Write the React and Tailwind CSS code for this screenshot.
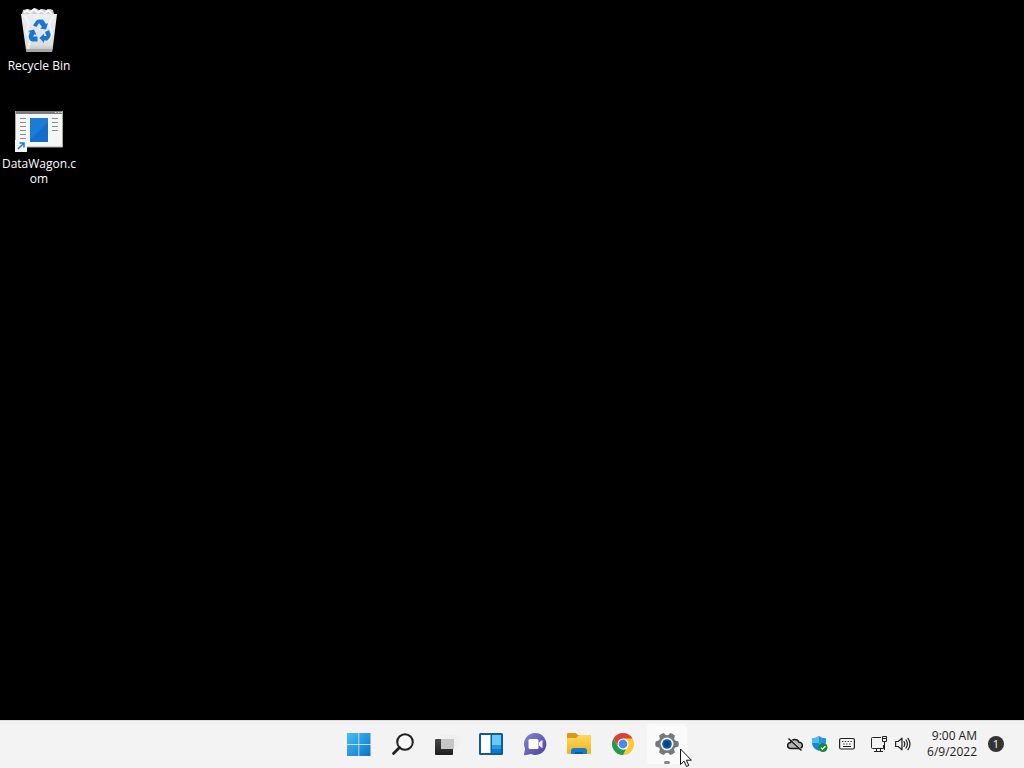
import { useState } from "react";

const RecycleBinIcon = () => (
    <svg viewBox="0 0 48 48" className="size-12" aria-hidden="true">
        <defs>
            <linearGradient id="bin" x1="0" y1="0" x2="0" y2="1">
                <stop offset="0" stopColor="#eceef0" />
                <stop offset="0.8" stopColor="#dddfe1" />
                <stop offset="1" stopColor="#b5b7b9" />
            </linearGradient>
        </defs>
        <path d="M7 8l1-4 5-1 3 1 4-2 4 2 3-1 5 1 3-1 3 1 1 4z" fill="#cfd1d4" />
        <path d="M9 7l3-3 3 3 4-4 4 4 3-3 4 4 3-4 4 4" fill="none" stroke="#fff" strokeWidth="1.5" />
        <path d="M6 8h36l-4.500 36.500q-.2 1.500-1.500 1.500H12.500q-1.300 0-1.500-1.500z" fill="url(#bin)" />
        <path d="M10 10l4 8-3 8 4 9-2 8M38 10l-4 8 3 9-4 8M20 11l8 3" fill="none" stroke="#f9fafb" strokeWidth="2" opacity=".7" />
        <path d="M11 43h26v1.500q-.2 1.500-1.500 1.500H12.500q-1.300 0-1.500-1.500z" fill="#a5a7a9" />
        <g fill="#1878d0">
            <path d="M18 19.500l3-4.500q1-1.500 3-1.500h4l3 4.500 2-1-2 6.500-6-1 2-1.500-3-4-2.500 4z" />
            <path d="M30 26l4-2 1.500 4q.5 2-1 4l-2 2.500h-3.500V37l-4.500-5 4.500-4.500V30h2.500z" />
            <path d="M15 26l-2-1 6-1.500 2.500 5.500-2-.8-1.500 2.300h4.500v5h-5q-2 0-3-2l-1-3z" />
        </g>
    </svg>
);

const ShortcutIcon = () => (
    <svg viewBox="0 0 48 48" className="size-12" aria-hidden="true">
        <path d="M0 7h48v36H0z" fill="#f6f6f6" />
        <path d="M0 7h48v3H0z" fill="#7b7b7b" />
        <path d="M40 8.500h1.500M43 8.500h1.500M45.500 8.500H47" stroke="#ddd" />
        <path d="M.5 7v36h47V7" fill="none" stroke="#a8a8a8" />
        <path d="M5 14.500h6M5 18.500h6M5 22.500h6M5 26.500h6M5 30.500h6M5 34.500h6M37 14.500h6M37 18.500h6M37 22.500h6M37 26.500h6" stroke="#8d8d8d" />
        <path d="M15 14h18v24H15z" fill="#1b7cd6" />
        <path d="M33 18L15 36v2h18z" fill="#146dc8" />
        <rect x="0" y="36" width="12" height="12" fill="#f5f5f5" />
        <path d="M3 45l6-6M4.500 39H9v4.500" fill="none" stroke="#1c7fd3" strokeWidth="1.500" />
    </svg>
);

const StartIcon = () => (
    <svg viewBox="0 0 24 24" className="size-6" aria-hidden="true">
        <defs>
            <linearGradient id="start" x1="0" y1="0" x2="24" y2="24" gradientUnits="userSpaceOnUse">
                <stop offset="0" stopColor="#45c4f0" />
                <stop offset="1" stopColor="#0c70cc" />
            </linearGradient>
        </defs>
        <path d="M0 1h11.500v11H0zM12.200 1h11.300v11H12.200zM0 12.700h11.500V24H0zM12.200 12.700h11.300V24H12.200z" fill="url(#start)" />
    </svg>
);

const SearchIcon = () => (
    <svg viewBox="0 0 24 24" className="size-6" fill="none" stroke="#202020" aria-hidden="true">
        <circle cx="14" cy="10" r="7.800" fill="#f7f7f7" strokeWidth="2" />
        <path d="M8.500 15.500L2.500 21.500" strokeWidth="2.800" strokeLinecap="round" />
    </svg>
);

const TaskViewIcon = () => (
    <svg viewBox="0 0 24 24" className="size-6" aria-hidden="true">
        <defs>
            <linearGradient id="task" x1="0" y1="0" x2="0" y2="1">
                <stop offset="0" stopColor="#4a4a4a" />
                <stop offset="1" stopColor="#1d1d1d" />
            </linearGradient>
        </defs>
        <rect x="0" y="7" width="18" height="16" rx="1" fill="url(#task)" />
        <path d="M7 3h16q1 0 1 1v10q0 1-1 1h-4z" fill="#efefef" />
        <rect x="6" y="7" width="13" height="10" fill="#c6c6c6" />
    </svg>
);

const WidgetsIcon = () => (
    <svg viewBox="0 0 24 24" className="size-6" aria-hidden="true">
        <rect x="0" y="1" width="24" height="22" rx="1.500" fill="#135a96" />
        <rect x="2" y="3" width="9.500" height="18" fill="#fbfdff" />
        <rect x="13" y="3" width="9" height="10" fill="#63cbf5" />
        <rect x="13" y="13" width="9" height="4" fill="#259be6" />
        <rect x="13" y="17" width="9" height="4" fill="#0d78d2" />
    </svg>
);

const ChatIcon = () => (
    <svg viewBox="0 0 24 24" className="size-6" aria-hidden="true">
        <defs>
            <linearGradient id="chat" x1="0" y1="0" x2="1" y2="1">
                <stop offset="0" stopColor="#8388d6" />
                <stop offset="1" stopColor="#4b409c" />
            </linearGradient>
        </defs>
        <path d="M12.500 1a11 11 0 1 1-4.500 21.100L1.800 23.200q-1 .1-.8-.9l1.100-5.500A11 11 0 0 1 12.500 1z" fill="url(#chat)" />
        <rect x="5.500" y="7" width="10" height="10" rx="1.500" fill="#fff" />
        <path d="M16 10.500l2.700-2.300q.8-.5.8.4v6.800q0 .9-.8.4L16 13.500z" fill="#f2efff" />
    </svg>
);

const ExplorerIcon = () => (
    <svg viewBox="0 0 24 24" className="size-6" aria-hidden="true">
        <defs>
            <linearGradient id="folder" x1="0" y1="0" x2="0" y2="1">
                <stop offset="0" stopColor="#ffd75e" />
                <stop offset="1" stopColor="#efb41e" />
            </linearGradient>
        </defs>
        <path d="M0 2q0-1 1-1h7q1 0 1.500.8L11 3h12q1 0 1 1v4H0z" fill="#d79a10" />
        <path d="M0 7q0-1 1-1h8l3-3h11q1 0 1 1v17q0 1-1 1H1q-1 0-1-1z" fill="url(#folder)" />
        <path d="M4 22v-3q0-3 3-3h10q3 0 3 3v3z" fill="#147bd1" />
        <path d="M8 20h8v2H8z" fill="#0b5cac" />
    </svg>
);

const ChromeIcon = () => (
    <svg viewBox="0 0 24 24" className="size-6" aria-hidden="true">
        <path d="M2.470 6.500A11 11 0 0 1 21.530 6.500L12 12z" fill="#d94236" />
        <path d="M21.530 6.500A11 11 0 0 1 12 23L16.800 14.700 12 6.500z" fill="#fcc934" />
        <path d="M12 23A11 11 0 0 1 2.470 6.500L7.200 14.700l4.800 2.800 3.100-.2z" fill="#249a4b" />
        <path d="M2.470 6.500L7.200 14.700 12 12V6.500z" fill="#d94236" />
        <circle cx="12" cy="12" r="5.500" fill="#fff" />
        <circle cx="12" cy="12" r="4.400" fill="#4b88ec" />
    </svg>
);

const SettingsIcon = () => (
    <svg viewBox="0 0 24 24" className="size-6" aria-hidden="true">
        <g fill="#75797c">
            <circle cx="12" cy="12" r="9" />
            {[30, 90, 150, 210, 270, 330].map((angle) => (
                <path key={angle} d="M8.500 4.500L9.200.8Q12-.2 14.800.8l.7 3.700z" transform={`rotate(${angle} 12 12)`} />
            ))}
        </g>
        <circle cx="12" cy="12" r="6.500" fill="#f3f7fa" />
        <circle cx="12" cy="12" r="4.800" fill="#0f5ba8" />
        <circle cx="12" cy="12" r="3" fill="#084482" />
    </svg>
);

const CloudOffIcon = () => (
    <svg viewBox="0 0 16 16" className="size-4" aria-hidden="true">
        <path d="M3.800 12.500a3 3 0 0 1-.3-6A4.600 4.600 0 0 1 12 6.300a3.100 3.100 0 0 1 .5 6.200z" fill="#b5b5b5" stroke="#181818" strokeWidth="1.500" />
        <path d="M2.300 2l13 12" stroke="#f2f2f2" strokeWidth="1" />
        <path d="M1.500 2.500l13 12" stroke="#181818" strokeWidth="1.500" />
    </svg>
);

const SecurityIcon = () => (
    <svg viewBox="0 0 16 16" className="size-4" aria-hidden="true">
        <path d="M7 0Q4.500 2.200 0 2.200V7q0 5 7 8z" fill="#1b86d8" />
        <path d="M7 0q2.500 2.200 7 2.200V7H7z" fill="#2393e2" />
        <path d="M7 7h7q0 5-7 8z" fill="#3fb4f0" />
        <path d="M7 0Q4.500 2.200 0 2.200V7h7z" fill="#4fbdf3" />
        <circle cx="11" cy="11.500" r="4.500" fill="#168a2d" />
        <path d="M8.800 11.600l1.600 1.600 3-3" fill="none" stroke="#fff" strokeWidth="1.300" />
    </svg>
);

const KeyboardIcon = () => (
    <svg viewBox="0 0 16 16" className="size-4" fill="none" stroke="#222" aria-hidden="true">
        <rect x=".6" y="2.500" width="14.800" height="10.500" rx="1.500" strokeWidth="1.200" />
        <path d="M3 5.500h1.300M5.800 5.500h1.300M8.600 5.500h1.300M11.500 5.500h1.300M4.300 8h1.300M7.200 8h1.300M10.200 8h1.300M4 10.500h8" strokeWidth="1.200" />
    </svg>
);

const NetworkIcon = () => (
    <svg viewBox="0 0 18 16" className="h-4 w-[18px]" fill="none" stroke="#222" aria-hidden="true">
        <path d="M11 1.500H2.500q-1 0-1 1v9q0 1 1 1h11V9M6.500 12.500v3M10.500 12.500v3M4 15.500h9" />
        <path d="M12.500.5h4v5h-4zM14.500 5.500V14M12.500 2.500h4" />
    </svg>
);

const SpeakerIcon = () => (
    <svg viewBox="0 0 16 16" className="size-4" fill="none" stroke="#222" strokeWidth="1.200" strokeLinejoin="round" aria-hidden="true">
        <path d="M.6 5.500h2.600L7 2.200v11.600l-3.800-3.300H.6z" />
        <path d="M9 5.600q1.600 2.400 0 4.800M11 4q2.800 4 0 8M13 2.300q4 5.700 0 11.400" strokeLinecap="round" />
    </svg>
);

const Cursor = () => (
    <svg viewBox="0 0 12 19" className="pointer-events-none absolute top-7 left-[35px] h-[19px] w-3" aria-hidden="true">
        <path d="M.5 1v15.500l3.600-3.400 2.400 5.400 2.300-1-2.400-5.300h5z" fill="#fff" stroke="#111" />
    </svg>
);

const desktopItems = [
    { name: "Recycle Bin", Icon: RecycleBinIcon },
    { name: "DataWagon.com", Icon: ShortcutIcon },
];

const apps = [
    { name: "Start", Icon: StartIcon },
    { name: "Search", Icon: SearchIcon },
    { name: "Task View", Icon: TaskViewIcon },
    { name: "Widgets", Icon: WidgetsIcon },
    { name: "Chat", Icon: ChatIcon },
    { name: "File Explorer", Icon: ExplorerIcon },
    { name: "Google Chrome", Icon: ChromeIcon },
    { name: "Settings", Icon: SettingsIcon },
];

const TaskbarButton = ({ name, Icon, active, onClick }) => (
    <button type="button" aria-label={name} onClick={onClick} className="relative flex h-12 w-11 items-center justify-center">
        <span className={`flex size-10 items-center justify-center rounded ${active ? "bg-[#fafafa]" : ""}`}>
            <Icon />
        </span>
        {active && <span className="absolute bottom-1 h-[3px] w-1.5 rounded-full bg-[#858585]" />}
    </button>
);

const TrayButton = ({ name, children }) => (
    <button type="button" aria-label={name} className="flex items-center">
        {children}
    </button>
);

const App = () => {
    const [activeApp, setActiveApp] = useState("Settings");

    return (
        <div className="flex h-screen flex-col overflow-hidden bg-black font-['Open_Sans','Noto_Sans',sans-serif] text-xs">
            <main className="flex flex-1 flex-col items-start gap-1 pt-1.5">
                {desktopItems.map(({ name, Icon }) => (
                    <button key={name} type="button" className="flex min-h-[94px] w-[78px] flex-col items-center gap-1 px-px text-center leading-[15px] text-white">
                        <Icon />
                        <span className="w-full break-all">{name}</span>
                    </button>
                ))}
            </main>

            <footer className="grid h-12 grid-cols-[1fr_auto_1fr] items-center bg-[#f3f3f3] pl-0.5 text-[#1b1b1b] inset-shadow-[0_1px_0_#dedede]">
                <nav aria-label="Taskbar" className="col-start-2 flex">
                    {apps.map(({ name, Icon }) => (
                        <div key={name} className="relative">
                            <TaskbarButton name={name} Icon={Icon} active={activeApp === name} onClick={() => setActiveApp(name)} />
                            {name === "Settings" && <Cursor />}
                        </div>
                    ))}
                </nav>
                <div className="flex items-center justify-end pr-5">
                    <div className="flex items-center gap-[9px]">
                        <TrayButton name="OneDrive"><CloudOffIcon /></TrayButton>
                        <TrayButton name="Windows Security"><SecurityIcon /></TrayButton>
                    </div>
                    <div className="ml-[11px] flex items-center">
                        <TrayButton name="Touch keyboard"><KeyboardIcon /></TrayButton>
                    </div>
                    <div className="ml-[15px] flex items-center gap-[7px]">
                        <TrayButton name="Network"><NetworkIcon /></TrayButton>
                        <TrayButton name="Volume"><SpeakerIcon /></TrayButton>
                    </div>
                    <button type="button" className="ml-4 flex flex-col items-end leading-4 whitespace-nowrap">
                        <time>9:00 AM</time>
                        <time>6/9/2022</time>
                    </button>
                    <button type="button" aria-label="1 notification" className="ml-[11px] flex size-4 items-center justify-center rounded-full bg-[#333] text-[11px] leading-4 text-white">1</button>
                </div>
            </footer>
        </div>
    );
};

export default App;
